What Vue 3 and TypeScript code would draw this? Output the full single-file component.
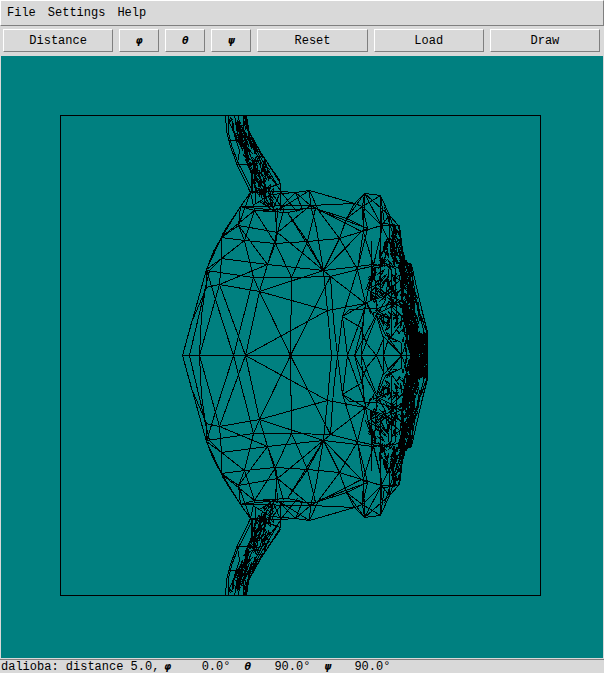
<script setup lang="ts">
type Point = [number, number]
type Row = [y: number, left: number, right: number]

interface Tool {
  label: string
  symbol: boolean
  name: string
}

const menus: string[] = ['File', 'Settings', 'Help']

const tools: Tool[] = [
  { label: 'Distance', symbol: false, name: 'Distance' },
  { label: 'φ', symbol: true, name: 'Phi' },
  { label: 'θ', symbol: true, name: 'Theta' },
  { label: 'ψ', symbol: true, name: 'Psi' },
  { label: 'Reset', symbol: false, name: 'Reset' },
  { label: 'Load', symbol: false, name: 'Load' },
  { label: 'Draw', symbol: false, name: 'Draw' },
]

const angles = [
  { symbol: 'φ', value: '0.0°' },
  { symbol: 'θ', value: '90.0°' },
  { symbol: 'ψ', value: '90.0°' },
]

// Edge chains of the model's upper half; the lower half is its mirror image.
const chains: Point[][] = [
  // silhouette
  [[182, 355], [206, 269], [221, 237], [240, 206], [250, 192]],
  [[280, 191], [295, 192], [309, 190], [354, 203], [364, 193], [380, 195], [389, 215], [398, 225], [403, 262], [411, 264], [415, 282], [421, 308], [427, 332], [427, 355]],
  // left cone
  [[182, 355], [191, 322], [206, 287], [206, 269]],
  [[189, 355], [205, 287], [209, 270], [221, 258]],
  [[199, 355], [201, 315], [205, 287], [219, 284], [259, 291], [327, 310]],
  [[199, 355], [219, 284]],
  [[233, 355], [215, 299], [206, 269]],
  [[233, 355], [253, 277]],
  [[245, 355], [219, 284], [267, 264], [275, 243]],
  [[245, 355], [259, 291]],
  [[290, 355], [259, 291], [253, 277], [244, 240], [238, 225]],
  [[245, 355], [327, 310], [365, 303]],
  [[290, 355], [291, 277], [275, 243]],
  [[290, 355], [330, 276]],
  [[330, 276], [291, 277], [253, 277], [206, 270]],
  [[206, 269], [221, 258], [267, 264], [323, 270], [357, 266], [372, 264], [400, 267]],
  [[221, 237], [221, 258], [219, 284]],
  [[221, 258], [244, 240], [254, 210]],
  [[206, 269], [213, 251], [221, 237], [244, 240], [275, 243], [307, 241], [339, 238], [361, 231], [381, 225], [398, 225]],
  [[259, 291], [323, 270], [361, 231]],
  [[259, 291], [267, 264], [277, 232]],
  [[267, 264], [238, 225], [277, 232], [323, 270]],
  [[206, 269], [223, 232], [240, 206], [254, 210], [287, 212]],
  [[221, 237], [238, 225], [240, 206]],
  [[223, 235], [254, 210], [275, 243], [277, 210]],
  [[238, 225], [250, 192], [254, 210]],
  [[240, 206], [310, 205], [354, 203]],
  [[254, 210], [315, 208], [346, 218]],
  [[240, 206], [276, 210]],
  // crown
  [[295, 192], [277, 210], [309, 190], [310, 205], [315, 208]],
  [[287, 212], [323, 270]],
  [[287, 212], [307, 241]],
  [[295, 192], [270, 194], [254, 204]],
  [[280, 191], [297, 212]],
  [[277, 232], [310, 205]],
  [[275, 210], [276, 232]],
  [[283, 210], [277, 232], [275, 243], [267, 264]],
  [[295, 192], [310, 205], [361, 231]],
  [[309, 190], [318, 210], [367, 228]],
  [[291, 277], [307, 241], [315, 208]],
  [[310, 205], [315, 223], [323, 270]],
  [[287, 212], [302, 209], [295, 192]],
  [[307, 241], [323, 270]],
  [[323, 270], [339, 238], [346, 218], [362, 206], [380, 195]],
  [[318, 210], [339, 238], [357, 269]],
  [[354, 203], [362, 206], [364, 193], [389, 215]],
  [[354, 203], [346, 218]],
  [[364, 193], [346, 218], [367, 228], [362, 206]],
  [[364, 193], [363, 230], [357, 269]],
  [[362, 206], [363, 232], [374, 268]],
  [[362, 206], [381, 225], [380, 195]],
  [[364, 193], [381, 225], [389, 215]],
  [[361, 231], [367, 228], [357, 269], [365, 303]],
  [[380, 195], [384, 223], [398, 225]],
  [[380, 195], [380, 290]],
  [[384, 207], [393, 235], [403, 262]],
  [[381, 225], [379, 258], [389, 240], [389, 215]],
  [[381, 225], [390, 244], [402, 262]],
  [[389, 215], [397, 240], [405, 262]],
  [[380, 236], [372, 268], [370, 300]],
  // cheek
  [[323, 270], [330, 276], [357, 269], [385, 263]],
  [[323, 270], [327, 310], [331, 355]],
  [[330, 276], [333, 320], [337, 355], [342, 316], [357, 269]],
  [[330, 276], [365, 303], [342, 316], [347, 355]],
  [[342, 316], [360, 327], [366, 343], [376, 355]],
  [[347, 355], [365, 306]],
  [[354, 355], [362, 325], [365, 303]],
  [[354, 355], [376, 314], [385, 335], [401, 342]],
  [[361, 355], [363, 316], [365, 303]],
  [[376, 355], [383, 338], [376, 316]],
  [[376, 316], [368, 336], [361, 355]],
  [[383, 355], [383, 336], [401, 355]],
  [[388, 338], [383, 355]],
  [[342, 316], [349, 309], [377, 308], [402, 300]],
  [[401, 355], [389, 339], [399, 325]],
  [[401, 355], [407, 340]],
  [[401, 342], [401, 355]],
  [[371, 240], [371, 300]],
  [[374, 268], [376, 312]],
  [[365, 303], [372, 268], [389, 264], [385, 300], [376, 314]],
  [[365, 290], [371, 275], [384, 293], [399, 280]],
  [[365, 303], [384, 293], [404, 302]],
  [[376, 314], [391, 306], [404, 318]],
  [[391, 270], [391, 335]],
  [[395, 268], [396, 322]],
  // horn outline
  [[225, 115], [226, 130], [229, 143], [236, 163], [250, 192]],
  [[228, 115], [228, 132], [231, 145], [238, 163], [252, 190]],
  [[228, 140], [239, 140]],
  [[236, 164], [252, 164]],
  [[237, 163], [239, 150], [233, 131], [228, 120]],
  [[244, 115], [246, 127], [254, 142], [280, 183], [280, 210]],
  [[245, 115], [248, 130], [262, 155], [280, 181]],
  [[243, 115], [243, 130], [256, 150], [277, 185]],
  [[250, 143], [265, 170], [280, 190]],
  [[234, 115], [237, 132], [244, 150], [252, 170]],
  [[238, 115], [240, 134], [250, 155], [262, 182]],
  [[251, 169], [251, 192]],
  [[252, 171], [252, 193]],
  [[254, 171], [255, 203]],
  [[280, 183], [266, 188], [250, 192], [281, 191]],
  [[280, 191], [272, 210]],
  // jaw ridge
  [[411, 264], [413, 295], [427, 334]],
  [[406, 264], [417, 305], [424, 334]],
  [[411, 270], [419, 320], [424, 322]],
  [[399, 225], [402, 250], [411, 285]],
]

function generator(seed: number): () => number {
  let state = seed
  return () => {
    state = (state * 1664525 + 1013904223) % 4294967296
    return state / 4294967296
  }
}

// Fine triangles packed between the left and right edge of each row.
function dense(rows: Row[], count: number, length: number, seed: number): string {
  const random = generator(seed)
  const top = rows[0][0]
  const bottom = rows[rows.length - 1][0]
  const place = (u: number, y: number): string => {
    const clamped = Math.min(bottom, Math.max(top, y))
    let i = 0
    while (i < rows.length - 2 && rows[i + 1][0] < clamped) i++
    const [y0, l0, r0] = rows[i]
    const [y1, l1, r1] = rows[i + 1]
    const t = (clamped - y0) / (y1 - y0)
    const left = l0 + (l1 - l0) * t
    const right = r0 + (r1 - r0) * t
    const across = Math.min(1, Math.max(0, u))
    return `${Math.round(left + (right - left) * across)} ${Math.round(clamped)}`
  }
  let path = ''
  for (let n = 0; n < count; n++) {
    const u = random()
    const y = top + (bottom - top) * random()
    const du = (random() - 0.5) * 0.4
    const dy = (0.4 + random() * 0.6) * length * (random() < 0.5 ? -1 : 1)
    path += `M${place(u, y)}L${place(u + du, y + dy)}L${place(u - du * 0.6, y + dy * 0.3)}`
  }
  return path
}

const edges = chains
  .map((chain) => 'M' + chain.map(([x, y]) => `${x} ${y}`).join('L'))
  .join('')

const patches = [
  dense([[115, 226, 246], [130, 231, 249], [143, 238, 255], [155, 243, 262], [165, 249, 267], [178, 251, 272]], 75, 12, 7),
  dense([[170, 251, 268], [190, 252, 273], [200, 258, 278], [209, 270, 284]], 52, 10, 19),
  dense([[225, 394, 398], [240, 390, 400], [255, 393, 403], [266, 398, 411]], 55, 8, 31),
  dense([[238, 384, 392], [262, 376, 400], [275, 369, 404], [290, 364, 404], [310, 366, 405], [318, 376, 405]], 85, 12, 43),
  dense([[312, 379, 405], [325, 382, 406], [341, 390, 406]], 26, 10, 57),
  dense([[262, 398, 411], [285, 400, 412], [305, 402, 414], [320, 403, 416], [334, 405, 420], [355, 410, 424]], 260, 9, 71),
  dense([[290, 411, 415], [310, 412, 420], [333, 413, 426]], 20, 9, 83),
  dense([[333, 412, 427], [355, 412, 427]], 120, 9, 97),
  dense([[325, 403, 412], [355, 405, 412]], 22, 9, 101),
].join('')
</script>

<template>
  <div class="window">
    <nav class="menubar" aria-label="Main menu">
      <button v-for="menu in menus" :key="menu" type="button" class="menu">{{ menu }}</button>
    </nav>
    <div class="toolbar" role="toolbar">
      <button
        v-for="tool in tools"
        :key="tool.name"
        type="button"
        class="tool"
        :class="{ symbol: tool.symbol }"
        :aria-label="tool.name"
      >{{ tool.label }}</button>
    </div>
    <main class="view">
      <svg class="model" viewBox="0.5 55.5 602 602" aria-hidden="true">
        <rect x="60" y="115" width="480" height="480" />
        <path d="M182 355H427" />
        <g>
          <path :d="edges" />
          <path :d="patches" />
        </g>
        <g transform="matrix(1 0 0 -1 0 710)">
          <path :d="edges" />
          <path :d="patches" />
        </g>
      </svg>
    </main>
    <footer class="status">
      <span class="summary">dalioba: distance 5.0,</span>
      <span v-for="angle in angles" :key="angle.symbol" class="angle">
        <span class="glyph">{{ angle.symbol }}</span>
        <span>{{ angle.value }}</span>
      </span>
    </footer>
  </div>
</template>

<style>
body {
  margin: 0;
  background: #d9d9d9;
}
</style>

<style scoped>
.window {
  display: flex;
  flex-direction: column;
  box-sizing: border-box;
  height: 100vh;
  background: #d9d9d9;
  color: #000;
  font: 12px/14px "Liberation Mono", "DejaVu Sans Mono", monospace;
}

button {
  margin: 0;
  padding: 0;
  background: #d9d9d9;
  color: inherit;
  font: inherit;
}

.menubar {
  display: flex;
  gap: 12px;
  padding: 5px 6px;
  border: 1px solid;
  border-color: #fff #7f7f7f #7f7f7f #fff;
}

.menu {
  border: 0;
}

.toolbar {
  display: flex;
  gap: 6px;
  padding: 3px 4px 4px 3px;
}

.tool {
  flex: 108 1 0;
  box-sizing: border-box;
  min-width: 0;
  height: 23px;
  border: 1px solid;
  border-color: #fff #7f7f7f #7f7f7f #fff;
}

.tool.symbol {
  flex-grow: 38;
}

.tool.symbol,
.glyph {
  font-family: "DejaVu Sans Mono", monospace;
  font-size: 11px;
  font-weight: bold;
  font-style: italic;
}

.view {
  display: flex;
  flex: 1;
  min-height: 0;
  margin: 0 1px;
  background: #008080;
}

.model {
  flex: 1;
  min-width: 0;
  fill: none;
  stroke: #000;
  stroke-width: 1;
  shape-rendering: crispEdges;
}

.status {
  display: flex;
  height: 13px;
  margin-top: 1px;
  padding-left: 1px;
  border-top: 1px solid #7f7f7f;
  border-bottom: 1px solid #fff;
  white-space: nowrap;
}

.summary {
  margin-right: 5px;
}

.angle {
  display: flex;
  justify-content: space-between;
  width: 66px;
  margin-right: 14px;
}
</style>
